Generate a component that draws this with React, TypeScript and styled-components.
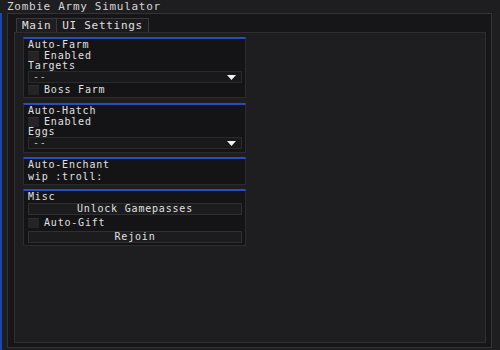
import * as React from "react";
import styled, { createGlobalStyle } from "styled-components";

const GlobalStyle = createGlobalStyle`
  html, body {
    margin: 0;
    padding: 0;
    background: #1e1e20;
  }
`;

type CheckProps = { label: string };
type DropProps = { value: string };

const Check: React.FC<CheckProps> = ({ label }) => (
  <CheckRow>
    <Box />
    <span>{label}</span>
  </CheckRow>
);

const Dropdown: React.FC<DropProps> = ({ value }) => (
  <Drop>
    <span>{value}</span>
    <svg width="9" height="5" viewBox="0 0 9 5">
      <path d="M0 0 L9 0 L4.5 5 Z" fill="#f2f2f2" />
    </svg>
  </Drop>
);

export default function App() {
  return (
    <Screen>
      <GlobalStyle />
      <Title>Zombie Army Simulator</Title>
      <Body>
        <Window>
          <TabBar>
            <Tab data-active="true">Main</Tab>
            <Tab>UI Settings</Tab>
          </TabBar>
          <Panel>
            <Section>
              <Header>Auto-Farm</Header>
              <Check label="Enabled" />
              <Label>Targets</Label>
              <Dropdown value="--" />
              <Check label="Boss Farm" />
            </Section>
            <Section $top={1}>
              <Header>Auto-Hatch</Header>
              <Check label="Enabled" />
              <Label>Eggs</Label>
              <Dropdown value="--" />
            </Section>
            <Section>
              <Header>Auto-Enchant</Header>
              <Label $tall>wip :troll:</Label>
            </Section>
            <Section>
              <Header>Misc</Header>
              <Button $top={1} $bottom={2}>Unlock Gamepasses</Button>
              <Check label="Auto-Gift" />
              <Button $top={3} $bottom={0}>Rejoin</Button>
            </Section>
          </Panel>
        </Window>
      </Body>
    </Screen>
  );
}

const Screen = styled.div`
  width: 500px;
  height: 350px;
  display: flex;
  flex-direction: column;
  background: #1e1e20;
  color: #e0e0e0;
  font-family: "DejaVu Sans Mono", "Liberation Mono", monospace;
  font-size: 10px;
  letter-spacing: 0.8px;
  overflow: hidden;
`;

const Title = styled.div`
  height: 13px;
  line-height: 14px;
  padding-left: 7px;
  font-size: 11px;
  letter-spacing: 0.7px;
  color: #d6d6d6;
`;

const Body = styled.div`
  flex: 1;
  display: flex;
  border-left: 2px solid #1b48ad;
  padding: 0 8px 2px 5px;
`;

const Window = styled.div`
  flex: 1;
  display: flex;
  flex-direction: column;
  background: #161618;
  border: 1px solid #333335;
`;

const TabBar = styled.div`
  height: 18px;
  display: flex;
  align-items: flex-end;
  padding-left: 8px;
`;

const Tab = styled.div`
  height: 13px;
  line-height: 14px;
  padding: 0 5px;
  font-size: 11px;
  letter-spacing: 0.7px;
  border: 1px solid #3a3a3c;
  border-bottom: none;
  background: #1a1a1c;
  margin-right: -1px;

  &[data-active="true"] {
    background: #1e1e20;
  }
`;

const Panel = styled.div`
  flex: 1;
  margin: 0 5px 4px 6px;
  border: 1px solid #2e2e30;
  background: #1e1e20;
  padding: 4px 8px;
  display: flex;
  flex-direction: column;
  gap: 4px;
`;

const Section = styled.div<{ $top?: number }>`
  width: 214px;
  margin-top: ${(p) => p.$top ?? 0}px;
  background: #141416;
  border: 1px solid #2c2c2e;
  border-top: 2px solid #2a4cc0;
  padding: 0 3px 2px 4px;
  display: flex;
  flex-direction: column;
`;

const Header = styled.div`
  height: 11px;
  line-height: 11px;
`;

const Label = styled.div<{ $tall?: boolean }>`
  height: ${(p) => (p.$tall ? 12 : 10)}px;
  line-height: ${(p) => (p.$tall ? 14 : 10)}px;
`;

const CheckRow = styled.div`
  height: 11px;
  line-height: 11px;
  display: flex;
  align-items: center;
  gap: 5px;
`;

const Box = styled.div`
  width: 11px;
  height: 9px;
  background: #242426;
  border-top: 1px solid #2e2e30;
`;

const Drop = styled.div`
  height: 10px;
  line-height: 10px;
  margin-bottom: 1px;
  display: flex;
  align-items: center;
  justify-content: space-between;
  padding: 0 5px 0 4px;
  background: #19191b;
  border: 1px solid #2a2a2c;
  color: #bbbbbb;
`;

const Button = styled.div<{ $top: number; $bottom: number }>`
  height: 10px;
  line-height: 10px;
  margin: ${(p) => p.$top}px 0 ${(p) => p.$bottom}px;
  text-align: center;
  background: #1c1c1e;
  border: 1px solid #303032;
`;
